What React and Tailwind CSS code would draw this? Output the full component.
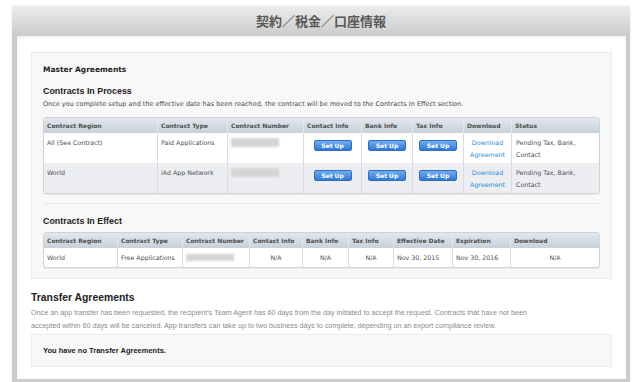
import React from "react";

const dv = { fontFamily: '"DejaVu Sans", Verdana, sans-serif' };
const lib = { fontFamily: '"Liberation Sans", Arial, sans-serif' };

function SetUp() {
  return (
    <div className="mx-auto mt-[7px] flex h-[11px] w-[38px] items-center justify-center rounded-[2px] border border-[#2e6cc2] bg-gradient-to-b from-[#6eaef2] to-[#3079d8] text-[6px] font-bold leading-none text-white">
      Set Up
    </div>
  );
}

function Blur({ className }) {
  return <div className={"h-[9px] w-[48px] bg-[#d5d5d5] blur-[0.8px] " + className} />;
}

function Download() {
  return (
    <div className="pt-[4px] text-center leading-[12px] text-[#2b8ad6]">
      Download
      <br />
      Agreement
    </div>
  );
}

function Row1({ region, type, bg }) {
  return (
    <div className={"grid h-[30px] grid-cols-[113px_70px_76px_58px_51px_51px_48px_88px] text-[6.3px] leading-[12px] text-[#4d4d4d] " + bg}>
      <div className="px-[3px] pt-[4px]">{region}</div>
      <div className="border-l border-[#d9dde3] px-[3px] pt-[4px]">{type}</div>
      <div className="border-l border-[#d9dde3] px-[3px] pt-[5px]">
        <Blur className="" />
      </div>
      <div className="border-l border-[#d9dde3]">
        <SetUp />
      </div>
      <div className="border-l border-[#d9dde3]">
        <SetUp />
      </div>
      <div className="border-l border-[#d9dde3]">
        <SetUp />
      </div>
      <div className="border-l border-[#d9dde3]">
        <Download />
      </div>
      <div className="border-l border-[#d9dde3] px-[4px] pt-[4px]">
        Pending Tax, Bank,
        <br />
        Contact
      </div>
    </div>
  );
}

export default function App() {
  const h1 = [
    "Contract Region",
    "Contract Type",
    "Contract Number",
    "Contact Info",
    "Bank Info",
    "Tax Info",
    "Download",
    "Status",
  ];
  const h2 = [
    "Contract Region",
    "Contract Type",
    "Contract Number",
    "Contact Info",
    "Bank Info",
    "Tax Info",
    "Effective Date",
    "Expiration",
    "Download",
  ];
  return (
    <div className="h-[382px] w-[640px] overflow-hidden bg-white pl-[12px] pt-[6px]" style={dv}>
      <div className="w-[618px] rounded-t-[4px] bg-[#cbcbcb] shadow-[0_0_2px_rgba(0,0,0,0.15)]">
        <div className="flex h-[30px] items-center justify-center rounded-t-[4px] bg-gradient-to-b from-[#ececec] to-[#cbcbcb]">
          <span
            className="text-[13px] font-bold text-[#585858]"
            style={{ fontFamily: '"Noto Sans CJK JP", "Noto Sans", sans-serif' }}
          >
            契約／税金／口座情報
          </span>
        </div>
        <div className="pb-[3px] pl-[5px] pr-[4px]">
          <div className="h-[343px] bg-white px-[14px] pt-[16px] shadow-[inset_0_2px_3px_rgba(0,0,0,0.06)]">
            {/* Master Agreements box */}
            <div className="border border-[#ebebeb] bg-[#f8f8f8] px-[11px] pb-[10px] pt-[12px]">
              <div className="text-[7.5px] font-bold leading-[10px] text-[#222]">Master Agreements</div>
              <div className="mt-[11px] text-[8.9px] font-bold leading-[11px] text-[#222]" style={lib}>
                Contracts In Process
              </div>
              <div className="mt-[3px] text-[6.5px] leading-[9px] text-[#4a4a4a]">
                Once you complete setup and the effective date has been reached, the contract will be moved to the
                Contracts In Effect section.
              </div>

              <div className="mt-[8px] overflow-hidden rounded-[3px] border border-[#cdd3db] bg-white shadow-[0_1px_1px_rgba(0,0,0,0.06)]">
                <div className="grid h-[15px] grid-cols-[113px_70px_76px_58px_51px_51px_48px_88px] bg-gradient-to-b from-[#e2e7ed] to-[#c8d0da] text-[6px] font-bold text-[#4f4f4f]">
                  {h1.map((h, i) => (
                    <div
                      key={h}
                      className={"flex items-center px-[3px] " + (i > 0 ? "border-l border-[#e3e7ec]" : "")}
                    >
                      {h}
                    </div>
                  ))}
                </div>
                <Row1 region="All (See Contract)" type="Paid Applications" bg="bg-white" />
                <Row1 region="World" type="iAd App Network" bg="bg-[#eceef2]" />
              </div>

              <div className="mt-[9px] h-px bg-[#e7e7e7]" />

              <div className="mt-[12px] text-[8.9px] font-bold leading-[11px] text-[#222]" style={lib}>
                Contracts In Effect
              </div>

              <div className="mt-[5px] overflow-hidden rounded-[3px] border border-[#cdd3db] bg-white shadow-[0_1px_1px_rgba(0,0,0,0.06)]">
                <div className="grid h-[15px] grid-cols-[73px_65px_67px_53px_46px_45px_59px_58px_89px] bg-gradient-to-b from-[#e2e7ed] to-[#c8d0da] text-[6px] font-bold text-[#4f4f4f]">
                  {h2.map((h, i) => (
                    <div
                      key={h}
                      className={"flex items-center px-[3px] " + (i > 0 ? "border-l border-[#e3e7ec]" : "")}
                    >
                      {h}
                    </div>
                  ))}
                </div>
                <div className="grid h-[19px] grid-cols-[73px_65px_67px_53px_46px_45px_59px_58px_89px] text-[6.3px] leading-[12px] text-[#4d4d4d]">
                  <div className="px-[3px] pt-[4px]">World</div>
                  <div className="border-l border-[#d9dde3] px-[3px] pt-[4px]">Free Applications</div>
                  <div className="border-l border-[#d9dde3] px-[3px] pt-[6px]">
                    <Blur className="!h-[7px]" />
                  </div>
                  <div className="border-l border-[#d9dde3] pt-[4px] text-center">N/A</div>
                  <div className="border-l border-[#d9dde3] pt-[4px] text-center">N/A</div>
                  <div className="border-l border-[#d9dde3] pt-[4px] text-center">N/A</div>
                  <div className="border-l border-[#d9dde3] px-[3px] pt-[4px]">Nov 30, 2015</div>
                  <div className="border-l border-[#d9dde3] px-[3px] pt-[4px]">Nov 30, 2016</div>
                  <div className="border-l border-[#d9dde3] pt-[4px] text-center">N/A</div>
                </div>
              </div>
            </div>

            {/* Transfer Agreements */}
            <div className="mt-[12px] text-[10.4px] font-bold leading-[13px] text-[#222]" style={lib}>
              Transfer Agreements
            </div>
            <div className="mt-[2px] text-[7.2px] leading-[13px] text-[#8a8a8a]" style={lib}>
              Once an app transfer has been requested, the recipient's Team Agent has 60 days from the day initiated to
              accept the request. Contracts that have not been
              <br />
              accepted within 60 days will be canceled. App transfers can take up to two business days to complete,
              depending on an export compliance review.
            </div>
            <div className="mt-[2px] flex h-[33px] items-center border border-[#ececec] bg-[#f8f8f8] px-[11px]">
              <span className="text-[7.5px] font-bold text-[#222]" style={lib}>
                You have no Transfer Agreements.
              </span>
            </div>
          </div>
        </div>
      </div>
    </div>
  );
}
